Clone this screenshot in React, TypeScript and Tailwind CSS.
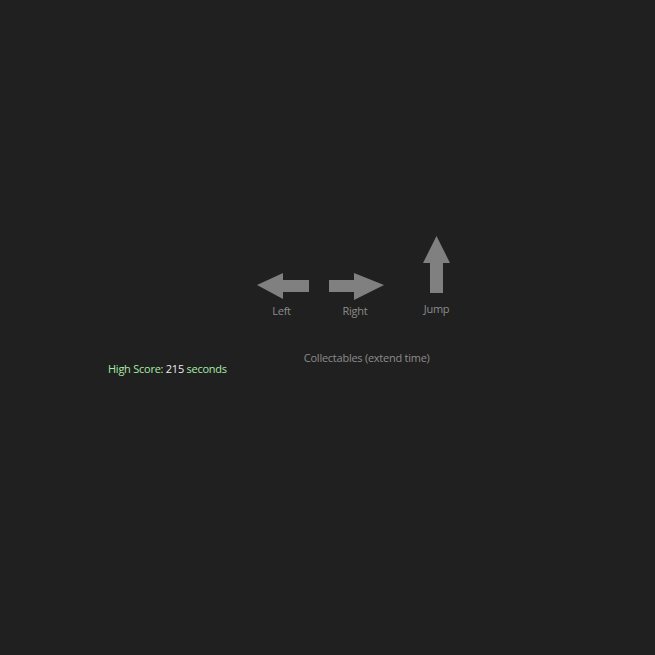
export default function App() {
  const font = { fontFamily: '"Open Sans", "Liberation Sans", sans-serif' };
  return (
    <div className="w-[655px] h-[655px] bg-[#202020] pt-[236px] tracking-[-0.25px]" style={font}>
      <div className="flex items-start pl-[257px]">
        <div className="flex flex-col items-center mt-[37px] w-[52px]">
          <svg width="52" height="27" viewBox="0 0 52 27">
            <polygon points="0,12 26,0 26,7 52,7 52,19 26,19 26,26" fill="#808080" />
          </svg>
          <span className="text-[11px] leading-[14px] mt-[4px] mr-[3px] text-[#8c8c8c]">Left</span>
        </div>
        <div className="flex flex-col items-center mt-[37px] w-[55px] ml-[20px]">
          <svg width="55" height="27" viewBox="0 0 55 27">
            <polygon points="0,7 25,7 25,0 55,12 25,27 25,19 0,19" fill="#808080" />
          </svg>
          <span className="text-[11px] leading-[14px] mt-[4px] mr-[3px] text-[#8c8c8c]">Right</span>
        </div>
        <div className="flex flex-col items-center w-[27px] ml-[39px]">
          <svg width="27" height="57" viewBox="0 0 27 57">
            <polygon points="13.5,0 27,27 20,27 20,57 7,57 7,27 0,27" fill="#808080" />
          </svg>
          <span className="text-[11px] leading-[14px] mt-[9px] text-[#8c8c8c]">Jump</span>
        </div>
      </div>
      <div className="flex items-start pl-[108px] mt-[33px]">
        <div className="mt-[11px] text-[11px] leading-[14px] text-[#a6eaa6]">
          High Score: <span className="text-[#ececec]">215</span> seconds
        </div>
        <div className="ml-[77px] text-[11px] leading-[14px] text-[#8c8c8c]">Collectables (extend time)</div>
      </div>
    </div>
  );
}
